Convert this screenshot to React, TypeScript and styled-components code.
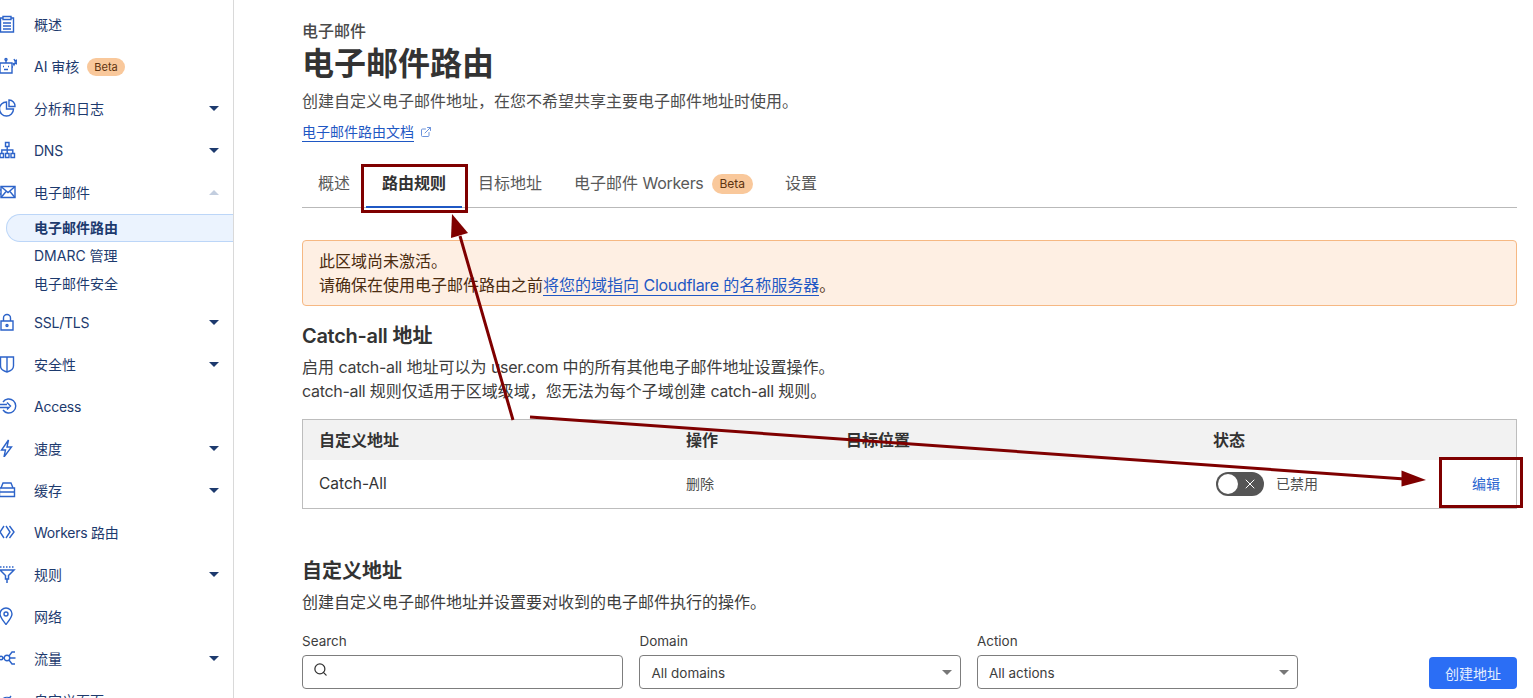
import React from 'react';
import styled, { createGlobalStyle } from 'styled-components';
import { ExternalLink, Search, X } from 'lucide-react';

const GlobalStyle = createGlobalStyle`
  html, body {
    margin: 0;
    padding: 0;
    height: 698px;
    overflow: hidden;
    background: #fff;
  }
  body {
    font-family: Inter, "Noto Sans CJK SC", sans-serif;
    font-size: 16px;
    color: #333;
  }
`;

const Page = styled.div`
  position: relative;
  display: flex;
  width: 1533px;
  height: 698px;
  overflow: hidden;
`;

const Sidebar = styled.nav`
  flex: none;
  box-sizing: border-box;
  width: 234px;
  height: 698px;
  padding-top: 3px;
  border-right: 1px solid #d9d9d9;
  overflow: hidden;
`;

const NavRow = styled.div<{ $tight?: boolean }>`
  display: flex;
  align-items: center;
  height: 42px;
  color: #1d3a6e;
  font-size: 14px;
  ${props => props.$tight && 'letter-spacing: -0.25px;'}
`;

const NavIcon = styled.svg`
  flex: none;
  width: 18px;
  height: 18px;
  margin-left: -1px;
  margin-right: 17px;
  fill: none;
  stroke: #2c63c9;
  stroke-width: 1.4;
`;

const NavLabel = styled.span`
  flex: 1;
  display: flex;
  align-items: center;
  gap: 8px;
`;

const Caret = styled.span<{ $open?: boolean }>`
  flex: none;
  width: 0;
  height: 0;
  margin-right: 14px;
  border-left: 5px solid transparent;
  border-right: 5px solid transparent;
  ${props =>
    props.$open
      ? 'border-bottom: 5px solid #c3cedf;'
      : 'border-top: 5px solid #1d3a6e;'}
`;

const Badge = styled.span<{ $large?: boolean }>`
  display: inline-block;
  margin-top: ${props => (props.$large ? 3 : 2)}px;
  padding: 0 ${props => (props.$large ? 8 : 7)}px;
  height: ${props => (props.$large ? 20 : 18)}px;
  line-height: ${props => (props.$large ? 20 : 18)}px;
  border-radius: 10px;
  background: #f9c89b;
  color: #5e3410;
  font-size: ${props => (props.$large ? 12 : 11)}px;
  font-weight: 400;
  letter-spacing: 0;
`;

const SubList = styled.div`
  display: flex;
  flex-direction: column;
  margin: 1px 0 3px 6px;
`;

const SubRow = styled.div<{ $active?: boolean }>`
  box-sizing: border-box;
  height: 28px;
  padding-left: 28px;
  line-height: 28px;
  font-size: 14px;
  color: #1d3a6e;
  ${props =>
    props.$active &&
    `
    font-weight: 600;
    background: #ebf3fe;
    border: 1px solid #bcd6f8;
    border-right: none;
    border-radius: 14px 0 0 14px;
    padding-left: 27px;
    line-height: 26px;
  `}
`;

const Main = styled.main`
  flex: 1;
  padding: 21px 16px 0 68px;
  min-width: 0;
`;

const Latin = styled.span`
  letter-spacing: -0.3px;
`;

const Crumb = styled.div`
  height: 20px;
  line-height: 20px;
  font-size: 16px;
  font-weight: 500;
  color: #4a4a4a;
`;

const Title = styled.h1`
  margin: 3px 0 0;
  height: 40px;
  line-height: 40px;
  font-size: 32px;
  font-weight: 700;
`;

const Lead = styled.p`
  margin: 7px 0 0;
  height: 20px;
  line-height: 20px;
  color: #4d4d4d;
`;

const DocLink = styled.a`
  display: inline-flex;
  align-items: center;
  margin-top: 11px;
  height: 20px;
  color: #1f58c4;
  font-size: 14px;
`;

const DocText = styled.span`
  line-height: 19px;
  border-bottom: 1px solid #1f58c4;
`;

const DocIcon = styled(ExternalLink)`
  margin-left: 6px;
  color: #6d94dc;
`;

const Tabs = styled.div`
  display: flex;
  align-items: stretch;
  height: 55px;
  margin-top: 10px;
  border-bottom: 1px solid #b9b9b9;
`;

const Tab = styled.div<{ $active?: boolean }>`
  position: relative;
  display: flex;
  align-items: center;
  gap: 8px;
  padding: 5px 16px 0;
  color: ${props => (props.$active ? '#333' : '#595959')};
  font-weight: ${props => (props.$active ? 600 : 400)};
  ${props =>
    props.$active &&
    `
    &::after {
      content: '';
      position: absolute;
      left: 0;
      right: 0;
      bottom: -1px;
      height: 2px;
      background: #1f58c4;
    }
  `}
`;

const Alert = styled.div`
  box-sizing: border-box;
  height: 66px;
  margin-top: 32px;
  padding: 8px 16px;
  background: #feefe3;
  border: 1px solid #f6b883;
  border-radius: 4px;
  line-height: 24px;
  color: #4b2c10;
`;

const AlertLink = styled.a`
  color: #1f58c4;
  border-bottom: 1px solid #1f58c4;
`;

const Heading = styled.h2<{ $top: number }>`
  margin: ${props => props.$top}px 0 0;
  height: 24px;
  line-height: 24px;
  font-size: 20px;
  font-weight: 600;
`;

const Copy = styled.p`
  margin: 7px 0 0;
  line-height: 24px;
  color: #3d3d3d;
`;

const Table = styled.div`
  box-sizing: border-box;
  height: 90px;
  margin-top: 16px;
  border: 1px solid #bdbdbd;
`;

const TableRow = styled.div<{ $head?: boolean }>`
  display: grid;
  grid-template-columns: 367px 160px 367px 1fr 76px;
  align-items: center;
  height: ${props => (props.$head ? '40px' : '48px')};
  padding-left: 16px;
  ${props => props.$head && 'box-sizing: border-box; padding-bottom: 2px; background: #f2f2f2; font-weight: 600;'}
`;

const BodyCell = styled.span`
  font-size: 15.5px;
  margin-top: -2px;
`;

const SmallCell = styled.span`
  font-size: 14px;
  color: #4d4d4d;
  margin-top: -2px;
`;

const StatusCell = styled.div`
  display: flex;
  align-items: center;
  gap: 12px;
  margin-left: 3px;
`;

const Toggle = styled.span`
  position: relative;
  display: inline-block;
  width: 48px;
  height: 24px;
  border-radius: 12px;
  background: #555;
`;

const ToggleKnob = styled.span`
  position: absolute;
  top: 2px;
  left: 2px;
  width: 20px;
  height: 20px;
  border-radius: 50%;
  background: #fff;
`;

const ToggleIcon = styled(X)`
  position: absolute;
  top: 4px;
  right: 6px;
  color: #fff;
`;

const EditLink = styled.a`
  justify-self: end;
  margin-top: -2px;
  padding-right: 16px;
  font-size: 14px;
  color: #2a64cf;
`;

const Filters = styled.div`
  display: flex;
  align-items: flex-end;
  margin-top: 18px;
`;

const Field = styled.label<{ $gap?: number }>`
  display: block;
  width: 321.45px;
  margin-right: ${props => props.$gap ?? 16}px;
`;

const FieldLabel = styled.div`
  height: 18px;
  line-height: 18px;
  margin-bottom: 5px;
  font-size: 13.5px;
  color: #3d3d3d;
`;

const Control = styled.div`
  position: relative;
  box-sizing: border-box;
  display: flex;
  align-items: center;
  height: 34px;
  padding: 1px 11px 0;
  border: 1px solid #7d7d7d;
  border-radius: 4px;
  color: #3d3d3d;
  font-size: 13.5px;
`;

const SearchIcon = styled(Search)`
  margin: -7px 0 0 -1px;
  color: #333;
`;

const SelectCaret = styled.span`
  position: absolute;
  right: 8px;
  top: 14px;
  width: 0;
  height: 0;
  border-left: 5px solid transparent;
  border-right: 5px solid transparent;
  border-top: 5px solid #777;
`;

const PrimaryButton = styled.button`
  width: 88px;
  height: 32px;
  margin-left: auto;
  padding: 0;
  border: none;
  border-radius: 4px;
  background: #2b6ef5;
  color: #e6eefe;
  font-family: inherit;
  font-size: 14px;
`;

const Annotations = styled.svg`
  position: absolute;
  left: 0;
  top: 0;
  width: 1533px;
  height: 698px;
  pointer-events: none;
`;

type IconName =
  | 'overview' | 'ai' | 'chart' | 'dns' | 'mail' | 'lock' | 'shield' | 'access'
  | 'bolt' | 'cache' | 'workers' | 'rules' | 'pin' | 'traffic' | 'pages';

const iconPaths: Record<IconName, React.ReactNode> = {
  overview: (
    <>
      <path d="M4 3H1.500v14h13V3H12" />
      <path d="M4 1.500h8v3H4zM4 8h8M4 11h8M4 14h8" />
    </>
  ),
  ai: (
    <>
      <path d="M1 6h12v10H1zM7 6V3M0 10h1M13 10h1" />
      <circle cx="7" cy="2.500" r="1" />
      <path d="M4 9.500h1M9 9.500h1M5 12.500h4M15 2l1 2 2-1-1 2 1 2-2-1-1 2-1-2" />
    </>
  ),
  chart: (
    <>
      <path d="M7.500 3a7 7 0 1 0 7 7h-7z" />
      <path d="M10 1a6 6 0 0 1 6 6.500h-6z" />
    </>
  ),
  dns: (
    <>
      <path d="M6.500 1.500h3.500v4H6.500zM1 12.500h3.500v4H1zM6.500 12.500h3.500v4H6.500zM12 12.500h3.500v4H12z" />
      <path d="M8.200 5.500v7M2.800 12.500V9h11v3.500" />
    </>
  ),
  mail: (
    <>
      <path d="M2 3.500h14v11H2z" />
      <path d="M2 3.500l7 6 7-6M2 14.500l5.500-6.500M16 14.500l-5.500-6.500M0 7h2M0 11h2" />
    </>
  ),
  lock: (
    <>
      <path d="M2 8h12v9H2z" />
      <path d="M4.500 8V5a3.500 3.500 0 0 1 7 0v3" />
      <circle cx="8" cy="12.500" r="1" />
    </>
  ),
  shield: (
    <>
      <path d="M1.500 2h13v9c0 3-3 5-6.500 6-3.500-1-6.500-3-6.500-6z" />
      <path d="M8 2v15" />
    </>
  ),
  access: (
    <>
      <path d="M4 5a7 7 0 1 1 0 8" />
      <path d="M0 7.500h8M0 10.500h10M8 5.500l3.500 3.500L8 12.500" />
    </>
  ),
  bolt: <path d="M9.500 1L2.500 11h4L5 18l7.500-10H8z" />,
  cache: (
    <>
      <path d="M2 7l2-5h8l2 5" />
      <path d="M0.500 7h15v4H0.500zM0.500 11h15v4.500H0.500z" />
    </>
  ),
  workers: (
    <>
      <path d="M5 3L1 9l4 6" />
      <path d="M7 3l4 6-4 6M10.500 3l4.500 6-4.500 6" />
    </>
  ),
  rules: (
    <>
      <path d="M1 5h14L9.500 10.500V14H6.500v-3.500zM8 14v4" strokeWidth="1.500" />
      <path d="M1 2h14" strokeDasharray="1.500 1.500" strokeWidth="1.500" />
    </>
  ),
  pin: (
    <>
      <path d="M7 17.500C3.500 13 1 10 1 7a6 6 0 0 1 12 0c0 3-2.500 6-6 10.500z" />
      <circle cx="7" cy="7" r="2" />
    </>
  ),
  traffic: (
    <>
      <circle cx="2" cy="9" r="1.800" />
      <circle cx="8" cy="9" r="2.800" />
      <path d="M4 9h1M10 7l3-4h3M10 11l3 4h3M11 9h5.500" />
    </>
  ),
  pages: <path d="M2 17a7 7 0 1 1 12 0M8 10l4-5" />,
};

type NavItem = {
  icon: IconName;
  label: string;
  caret?: boolean;
  beta?: boolean;
  open?: boolean;
  tight?: boolean;
};

const topItems: NavItem[] = [
  { icon: 'overview', label: '概述' },
  { icon: 'ai', label: 'AI 审核', beta: true },
  { icon: 'chart', label: '分析和日志', caret: true },
  { icon: 'dns', label: 'DNS', caret: true, tight: true },
  { icon: 'mail', label: '电子邮件', caret: true, open: true },
];

const bottomItems: NavItem[] = [
  { icon: 'lock', label: 'SSL/TLS', caret: true, tight: true },
  { icon: 'shield', label: '安全性', caret: true },
  { icon: 'access', label: 'Access', tight: true },
  { icon: 'bolt', label: '速度', caret: true },
  { icon: 'cache', label: '缓存', caret: true },
  { icon: 'workers', label: 'Workers 路由', tight: true },
  { icon: 'rules', label: '规则', caret: true },
  { icon: 'pin', label: '网络' },
  { icon: 'traffic', label: '流量', caret: true },
  { icon: 'pages', label: '自定义页面' },
];

const leadText = '创建自定义电子邮件地址\uFF0C在您不希望共享主要电子邮件地址时使用。';
const zoneNote = ' 规则仅适用于区域级域\uFF0C您无法为每个子域创建 ';

function NavEntry({ item }: { item: NavItem }) {
  return (
    <NavRow $tight={item.tight}>
      <NavIcon viewBox="0 0 18 18">{iconPaths[item.icon]}</NavIcon>
      <NavLabel>
        {item.label}
        {item.beta && <Badge>Beta</Badge>}
      </NavLabel>
      {item.caret && <Caret $open={item.open} />}
    </NavRow>
  );
}

export default function App() {
  return (
    <Page>
      <GlobalStyle />
      <Sidebar>
        {topItems.map(item => (
          <NavEntry key={item.label} item={item} />
        ))}
        <SubList>
          <SubRow $active>电子邮件路由</SubRow>
          <SubRow>DMARC 管理</SubRow>
          <SubRow>电子邮件安全</SubRow>
        </SubList>
        {bottomItems.map(item => (
          <NavEntry key={item.label} item={item} />
        ))}
      </Sidebar>

      <Main>
        <Crumb>电子邮件</Crumb>
        <Title>电子邮件路由</Title>
        <Lead>{leadText}</Lead>
        <DocLink>
          <DocText>电子邮件路由文档</DocText>
          <DocIcon size={12} />
        </DocLink>

        <Tabs>
          <Tab>概述</Tab>
          <Tab $active>路由规则</Tab>
          <Tab>目标地址</Tab>
          <Tab>
            <span>
              电子邮件 <Latin>Workers</Latin>
            </span>
            <Badge $large>Beta</Badge>
          </Tab>
          <Tab>设置</Tab>
        </Tabs>

        <Alert>
          此区域尚未激活。
          <br />
          请确保在使用电子邮件路由之前
          <AlertLink>
            将您的域指向 <Latin>Cloudflare</Latin> 的名称服务器
          </AlertLink>
          。
        </Alert>

        <Heading $top={18}>
          <Latin>Catch-all</Latin> 地址
        </Heading>
        <Copy>
          启用 <Latin>catch-all</Latin> 地址可以为 <Latin>user.com</Latin> 中的所有其他电子邮件地址设置操作。
          <br />
          <Latin>catch-all</Latin>
          {zoneNote}
          <Latin>catch-all</Latin> 规则。
        </Copy>

        <Table>
          <TableRow $head>
            <span>自定义地址</span>
            <span>操作</span>
            <span>目标位置</span>
            <span>状态</span>
            <span />
          </TableRow>
          <TableRow>
            <BodyCell>Catch-All</BodyCell>
            <SmallCell>删除</SmallCell>
            <span />
            <StatusCell>
              <Toggle>
                <ToggleKnob />
                <ToggleIcon size={16} strokeWidth={1.5} />
              </Toggle>
              <SmallCell>已禁用</SmallCell>
            </StatusCell>
            <EditLink>编辑</EditLink>
          </TableRow>
        </Table>

        <Heading $top={50}>自定义地址</Heading>
        <Copy>创建自定义电子邮件地址并设置要对收到的电子邮件执行的操作。</Copy>

        <Filters>
          <Field>
            <FieldLabel>Search</FieldLabel>
            <Control>
              <SearchIcon size={15} />
            </Control>
          </Field>
          <Field>
            <FieldLabel>Domain</FieldLabel>
            <Control>
              All domains
              <SelectCaret />
            </Control>
          </Field>
          <Field $gap={0}>
            <FieldLabel>Action</FieldLabel>
            <Control>
              All actions
              <SelectCaret />
            </Control>
          </Field>
          <PrimaryButton>创建地址</PrimaryButton>
        </Filters>
      </Main>

      <Annotations viewBox="0 0 1533 698">
        <g fill="none" stroke="#7f0000" strokeWidth="3">
          <rect x="362.500" y="165.500" width="104" height="46" />
          <rect x="1440.500" y="458.500" width="81" height="48" />
          <path d="M513 420L460 236M530 417L1405 479" />
        </g>
        <path d="M452 214L451 238L468 233Z" fill="#7f0000" />
        <path d="M1426 480L1401.500 470.500L1401.500 486.500Z" fill="#7f0000" />
      </Annotations>
    </Page>
  );
}
